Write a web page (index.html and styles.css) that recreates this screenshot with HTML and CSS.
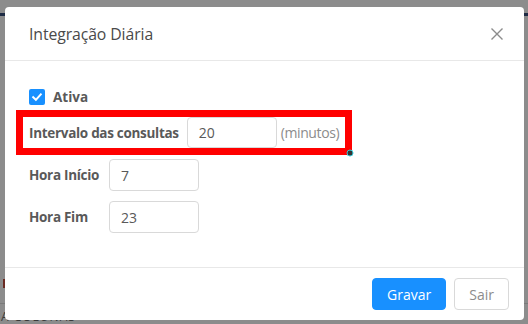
FILE: index.html
```html
<!DOCTYPE html>
<html lang="pt">
<head>
<meta charset="utf-8">
<title>Integração Diária</title>
<link rel="stylesheet" href="styles.css">
</head>
<body>
<div class="page">
  <div class="page-topbar"></div>
  <div class="page-spacer"></div>
  <div class="page-row"><span class="page-mark"></span></div>
  <div class="page-line"></div>
  <div class="page-caption">A COLUNAS</div>
</div>

<div class="modal">
  <div class="modal-header">
    <span class="modal-title">Integração Diária</span>
    <svg class="close" width="12" height="12" viewBox="0 0 12 12" aria-label="Fechar">
      <path d="M0.5 0.5 L11.5 11.5 M11.5 0.5 L0.5 11.5" stroke="#8c8c8c" stroke-width="1.4" fill="none"/>
    </svg>
  </div>
  <div class="modal-body">
    <label class="check-row">
      <span class="checkbox">
        <svg width="16" height="16" viewBox="0 0 16 16"><path d="M4.2 8.2 L6.9 10.8 L11.8 5.4" stroke="#fff" stroke-width="2" fill="none" stroke-linecap="square"/></svg>
      </span>
      <span class="check-label">Ativa</span>
    </label>
    <div class="form-row highlighted">
      <span class="label">Intervalo das consultas</span>
      <span class="input">20</span>
      <span class="suffix">(minutos)</span>
    </div>
    <div class="form-row">
      <span class="label fixed">Hora Início</span>
      <span class="input">7</span>
    </div>
    <div class="form-row">
      <span class="label fixed">Hora Fim</span>
      <span class="input">23</span>
    </div>
  </div>
  <div class="modal-footer">
    <button class="btn primary">Gravar</button>
    <button class="btn">Sair</button>
  </div>
  <svg class="handle" width="8" height="8" viewBox="0 0 8 8"><circle cx="4" cy="4" r="3" fill="#333" stroke="#35c9d8" stroke-width="1"/></svg>
</div>
</body>
</html>
```

FILE: styles.css
```css
html, body {
  margin: 0;
  padding: 0;
}
body {
  width: 528px;
  height: 324px;
  overflow: hidden;
  background: #8c8c8c;
  font-family: "Open Sans", "Noto Sans", sans-serif;
  position: relative;
}
.page {
  display: flex;
  flex-direction: column;
  height: 324px;
}
.page-topbar {
  margin-top: 13px;
  height: 3px;
  background: #1e2b45;
}
.page-spacer {
  height: 268px;
}
.page-row {
  height: 25px;
}
.page-mark {
  display: block;
  margin-left: 3px;
  width: 2px;
  height: 9px;
  background: #6b2a22;
}
.page-line {
  height: 1px;
  background: #7a7a7a;
}
.page-caption {
  margin-top: 6px;
  font-size: 12px;
  line-height: 14px;
  color: #3a3a3a;
  letter-spacing: 1px;
  margin-left: 1px;
}

.modal {
  position: absolute;
  left: 5px;
  top: 7px;
  width: 519px;
  height: 313px;
  background: #fff;
  border-radius: 4px;
  display: flex;
  flex-direction: column;
  color: #595959;
}
.modal-header {
  height: 54px;
  box-sizing: border-box;
  border-bottom: 1px solid #e8e8e8;
  display: flex;
  align-items: center;
  justify-content: space-between;
  padding: 0 21px 0 24px;
}
.modal-title {
  font-size: 15.8px;
  color: #4a4a4a;
  letter-spacing: -0.1px;
}
.close {
  display: block;
  margin-top: 1px;
}
.modal-body {
  flex: 1;
  padding: 25px 24px 0 24px;
  display: flex;
  flex-direction: column;
  align-items: flex-start;
  font-size: 13.5px;
}
.check-row {
  display: flex;
  align-items: center;
  height: 22px;
  margin-bottom: 9px;
}
.checkbox {
  width: 16px;
  height: 16px;
  border-radius: 2px;
  background: #1890ff;
  display: block;
}
.checkbox svg { display: block; }
.check-label {
  margin-left: 8px;
  font-weight: bold;
  color: #595959;
}
.form-row {
  display: flex;
  align-items: center;
  height: 32px;
  margin-bottom: 10px;
}
.form-row.highlighted {
  height: 31px;
  margin-bottom: 11px;
  margin-left: -6px;
  padding: 0 6px 0 6px;
  outline: 7px solid #ff0000;
}
.label {
  font-weight: bold;
  color: #595959;
  margin-right: 8px;
  letter-spacing: -0.3px;
}
.label.fixed {
  width: 72px;
  white-space: nowrap;
}
.input {
  box-sizing: border-box;
  width: 90px;
  height: 100%;
  border: 1px solid #d9d9d9;
  border-radius: 4px;
  padding: 0 11px;
  display: flex;
  align-items: center;
  color: #595959;
  font-size: 14px;
}
.suffix {
  margin-left: 4px;
  color: #8c8c8c;
  font-size: 14px;
  letter-spacing: -0.4px;
}
.modal-footer {
  height: 53px;
  box-sizing: border-box;
  border-top: 1px solid #e8e8e8;
  display: flex;
  justify-content: flex-end;
  align-items: center;
  gap: 8px;
  padding: 0 15px 0 16px;
}
.btn {
  height: 32px;
  border-radius: 4px;
  border: 1px solid #d9d9d9;
  background: #fff;
  color: #8c8c8c;
  font-family: inherit;
  font-size: 14px;
  padding: 0 14px;
}
.btn.primary {
  background: #1890ff;
  border-color: #1890ff;
  color: #fff;
  padding: 0 14px;
}
.handle {
  position: absolute;
  left: 341px;
  top: 142px;
}
```
